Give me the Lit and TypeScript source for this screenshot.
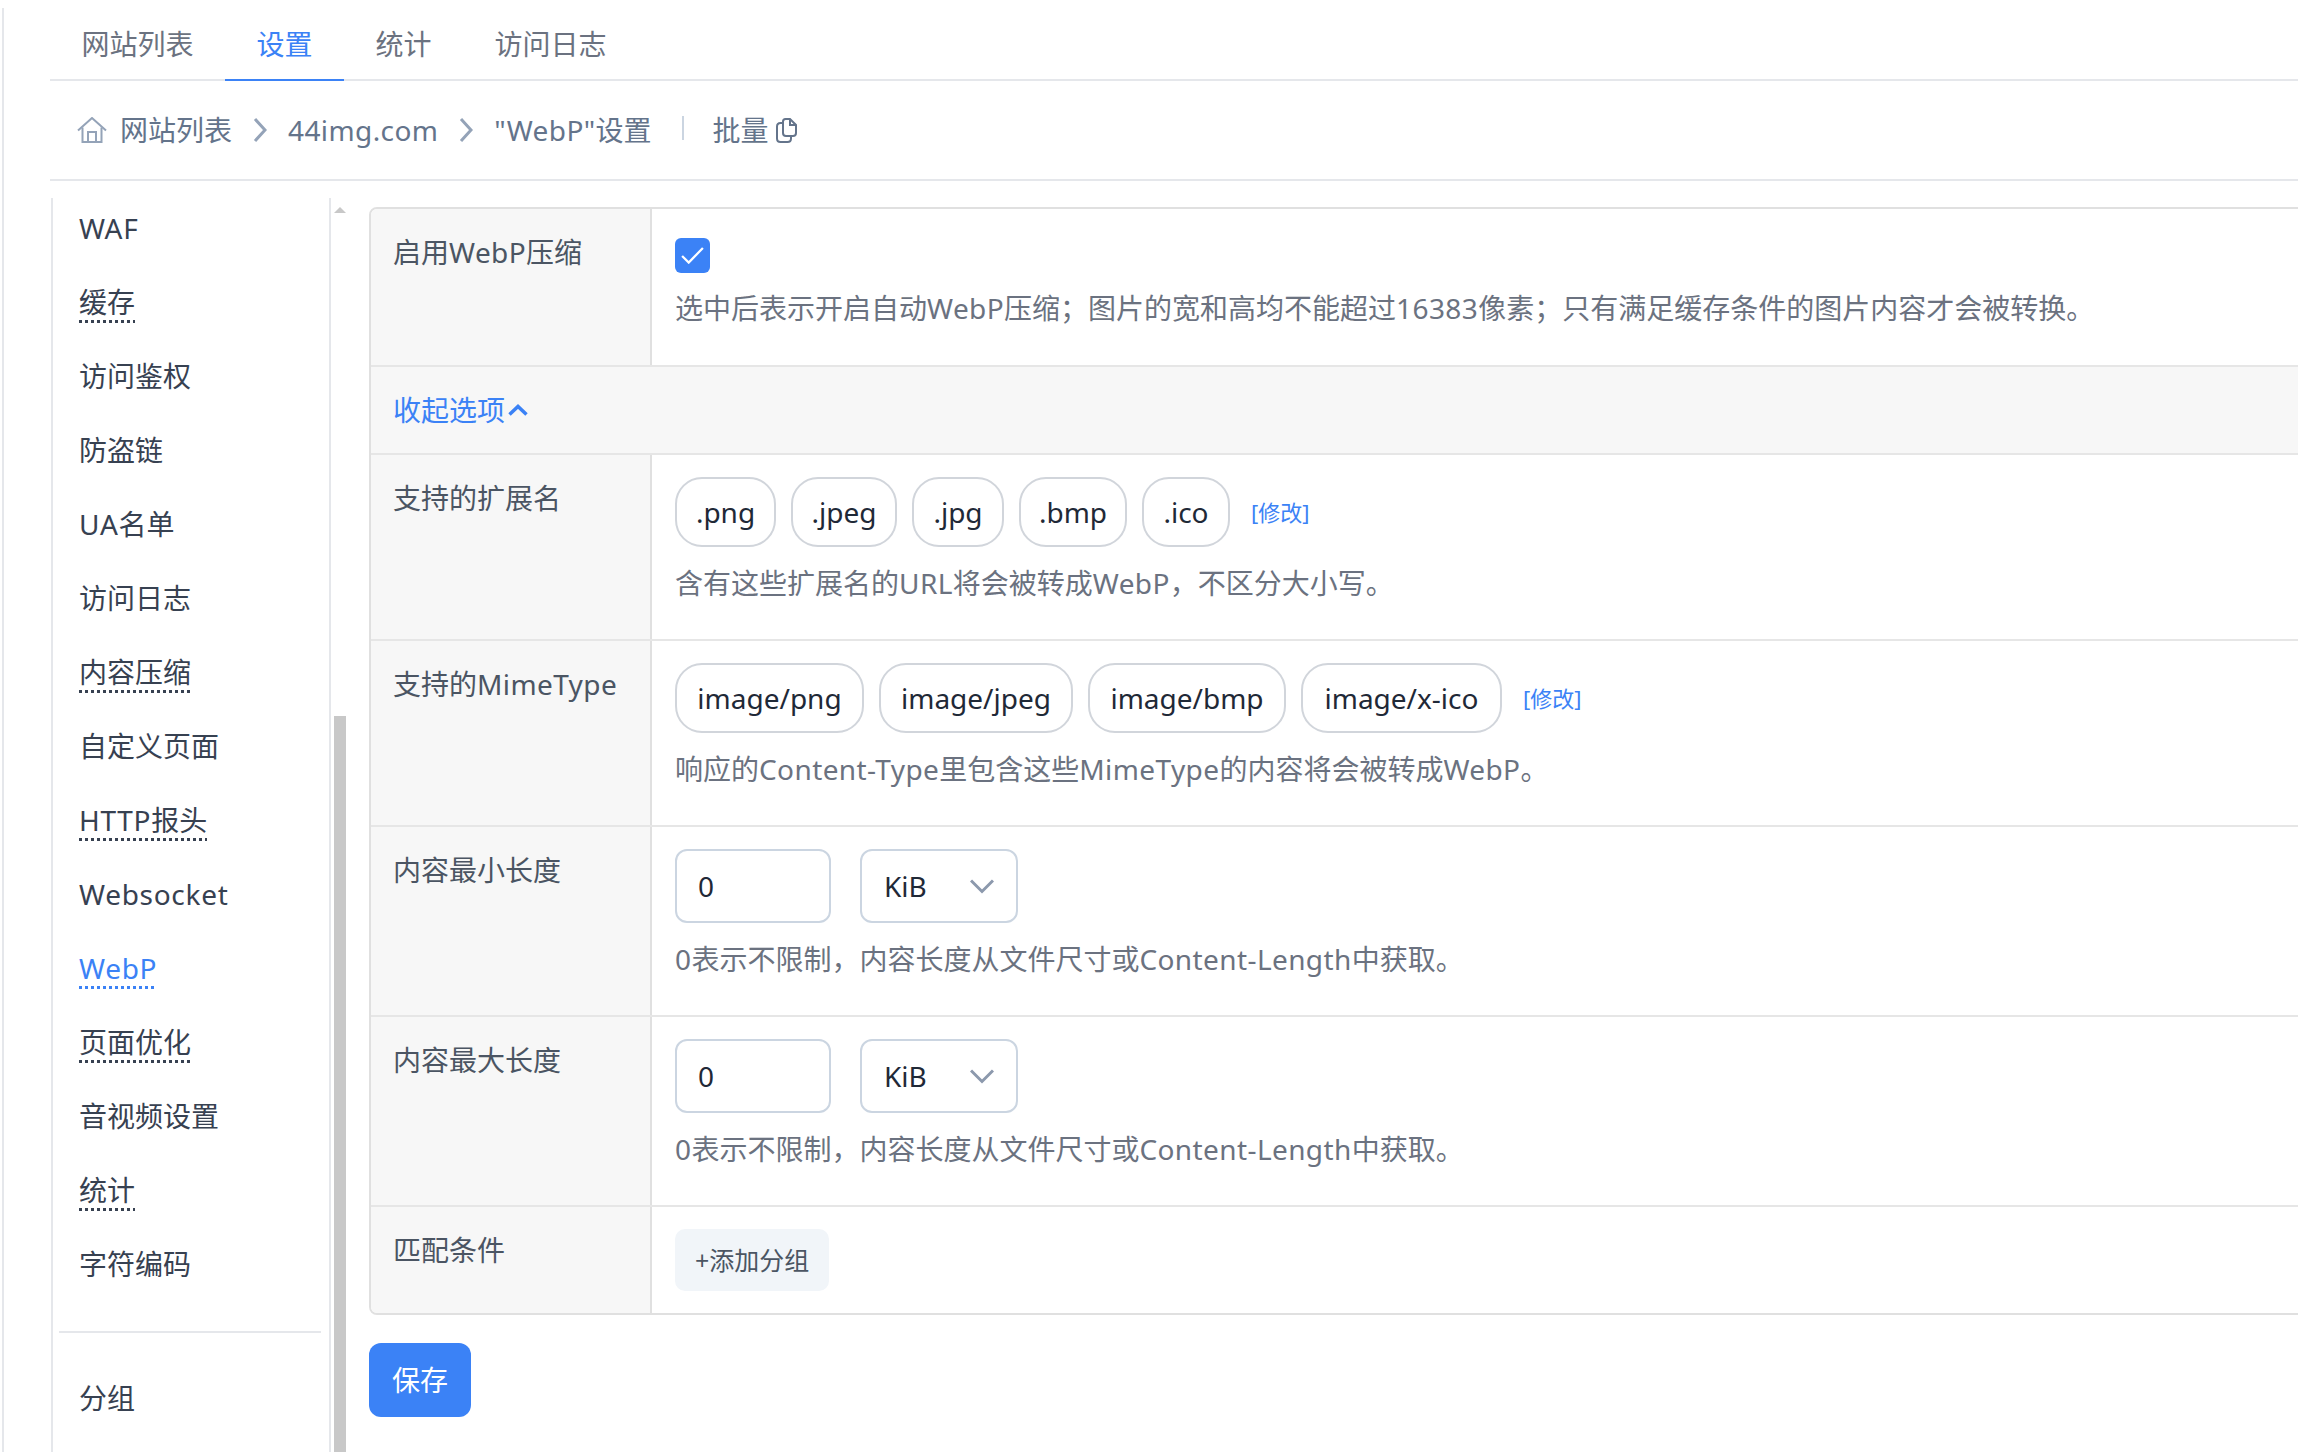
import { LitElement, html, css, svg } from "lit";
import { customElement } from "lit/decorators.js";

const FONT = css`"Noto Sans", "Noto Sans CJK SC", sans-serif`;

const SIDE: [string, string][] = [
  ["WAF", ""],
  ["缓存", "dot"],
  ["访问鉴权", ""],
  ["防盗链", ""],
  ["UA名单", ""],
  ["访问日志", ""],
  ["内容压缩", "dot"],
  ["自定义页面", ""],
  ["HTTP报头", "dot"],
  ["Websocket", ""],
  ["WebP", "dot on"],
  ["页面优化", "dot"],
  ["音视频设置", ""],
  ["统计", "dot"],
  ["字符编码", ""],
];

type Pill = [string, number];
const EXT: Pill[] = [[".png", 101], [".jpeg", 106], [".jpg", 92], [".bmp", 108], [".ico", 88]];
const MIME: Pill[] = [["image/png", 189], ["image/jpeg", 194], ["image/bmp", 198], ["image/x-ico", 201]];

/** Latin runs in the reference's UI font are slightly wider than Noto Sans, so they get their own tracking. */
const la = (text: string) =>
  text.split(/([\x21-\x7e]+)/).map((part, i) => (i % 2 ? html`<span class="latin">${part}</span>` : part));

const chevronRight = svg`<svg class="crumb-sep" viewBox="0 0 14 26" width="14" height="26" fill="none" stroke="#94a3b8" stroke-width="3"><path d="M2 2l10 11L2 24"/></svg>`;

@customElement("app-root")
export class AppRoot extends LitElement {
  static styles = css`
    :host {
      display: block;
      width: 2298px;
      height: 1452px;
      overflow: hidden;
      background: #fff;
      font-family: ${FONT};
      font-size: 28px;
      line-height: 40px;
      color: #374151;
    }
    .latin { letter-spacing: 0.4px; }
    .page {
      margin: 8px 0 0 2px;
      height: 1444px;
      border-left: 2px solid #e5e7eb;
      padding-left: 46px;
      display: flex;
      flex-direction: column;
      box-sizing: border-box;
      overflow: hidden;
    }
    .tabs {
      display: flex;
      height: 73px;
      box-sizing: border-box;
      flex: none;
      border-bottom: 2px solid #e5e7eb;
    }
    .tab {
      padding: 0 31.5px;
      height: 73px;
      box-sizing: border-box;
      display: flex;
      align-items: center;
      color: #6b7280;
      padding-bottom: 2px;
      flex: none;
    }
    .tab.on {
      color: #3b82f6;
      border-bottom: 2px solid #3b82f6;
      padding-bottom: 0;
    }
    .crumbs {
      display: flex;
      align-items: center;
      height: 100px;
      box-sizing: border-box;
      flex: none;
      border-bottom: 2px solid #e5e7eb;
      padding-left: 27px;
      color: #64748b;
    }
    .home { margin-right: 13px; }
    .crumb-sep { margin: 0 21px; flex: none; }
    .vsep {
      width: 2px;
      height: 24px;
      background: #cbd5e1;
      margin: -4px 29px 0 30px;
    }
    .copy { margin-left: 7px; }
    .body {
      display: flex;
      flex: 1;
      min-height: 0;
      margin-top: 17px;
      overflow: hidden;
    }
    .side {
      flex: none;
      width: 280px;
      margin-left: 1px;
      box-sizing: border-box;
      border-left: 2px solid #e5e7eb;
      border-right: 2px solid #e5e7eb;
      padding-left: 26px;
      overflow: hidden;
    }
    .menu { margin-top: -7px; }
    .item {
      height: 74px;
      display: flex;
      align-items: center;
      color: #374151;
    }
    .item > span { display: inline-block; line-height: 42px; height: 42px; }
    .item .latin { letter-spacing: 0.7px; }
    .item .dot {
      background: repeating-linear-gradient(90deg, currentColor 0 3px, transparent 3px 6px) left bottom / 100% 3px no-repeat;
    }
    .item .on { color: #3b82f6; }
    .side-line {
      height: 2px;
      background: #e5e7eb;
      margin: 30px 8px 0 -20px;
    }
    .item.group { margin-top: 28px; }
    .bar {
      flex: none;
      width: 12px;
      margin-left: 3px;
      display: flex;
      flex-direction: column;
    }
    .arrow { margin: 9px 0 503px; display: block; }
    .thumb { flex: 1; background: #c8c8c8; }
    .main {
      flex: none;
      width: 2000px;
      margin-left: 23px;
    }
    .table {
      margin-top: 9px;
      border: 2px solid #e0e0e0;
      border-radius: 8px;
      overflow: hidden;
    }
    .row {
      display: grid;
      grid-template-columns: 281px 1fr;
      border-bottom: 2px solid #e6e6e6;
    }
    .row:last-child { border-bottom: 0; }
    .row.block { display: block; }
    .label {
      background: #f7f7f7;
      padding: 23px 20px 0 22px;
      border-right: 2px solid #e0e0e0;
      color: #4b5563;
    }
    .cell { padding: 22px 23px 36px; }
    .cell.first { padding-bottom: 37px; }
    .cell.short { padding-bottom: 22px; }
    .toggle {
      background: #f7f7f7;
      height: 86px;
      padding-left: 22px;
      display: flex;
      align-items: center;
      color: #3b82f6;
    }
    .toggle svg { margin-left: 3px; }
    .check {
      width: 35px;
      height: 35px;
      border-radius: 6px;
      background: #3b82f6;
      margin-top: 7px;
      display: flex;
      align-items: center;
      justify-content: center;
    }
    .help { color: #6b7280; margin-top: 16px; white-space: nowrap; }
    .check + .help { margin-top: 15px; }
    .pills { display: flex; align-items: center; gap: 15px; }
    .pill {
      height: 70px;
      box-sizing: border-box;
      border: 2px solid #d1d5db;
      border-radius: 27px;
      display: flex;
      align-items: center;
      justify-content: center;
      color: #1f2937;
      white-space: nowrap;
    }
    .edit { color: #3b82f6; font-size: 22px; margin-left: 6px; }
    .inputs { display: flex; gap: 29px; }
    .input, .select {
      height: 74px;
      box-sizing: border-box;
      border: 2px solid #cbd5e1;
      border-radius: 12px;
      display: flex;
      align-items: center;
      color: #1f2937;
    }
    .input { width: 156px; padding-left: 21px; }
    .select {
      width: 158px;
      padding: 0 22px;
      justify-content: space-between;
    }
    .add {
      display: inline-flex;
      align-items: center;
      height: 62px;
      padding: 0 20px;
      background: #f1f5f9;
      border-radius: 10px;
      font-size: 25px;
      color: #4b5563;
    }
    .save {
      margin-top: 28px;
      width: 102px;
      height: 74px;
      border-radius: 12px;
      background: #3b82f6;
      color: #fff;
      display: flex;
      align-items: center;
      justify-content: center;
    }
  `;

  private sizeRow(label: string) {
    return html`<div class="row">
      <div class="label">${label}</div>
      <div class="cell">
        <div class="inputs">
          <div class="input">0</div>
          <div class="select">
            <span>KiB</span>
            <svg viewBox="0 0 24 15" width="24" height="15" fill="none" stroke="#8c99ad" stroke-width="3"><path d="M1 1.500l11 11 11-11"/></svg>
          </div>
        </div>
        <div class="help">${la("0表示不限制，内容长度从文件尺寸或Content-Length中获取。")}</div>
      </div>
    </div>`;
  }

  private pillRow(label: string, pills: Pill[], help: string) {
    return html`<div class="row">
      <div class="label">${la(label)}</div>
      <div class="cell">
        <div class="pills">
          ${pills.map(([t, w]) => html`<div class="pill" style="width:${w}px">${t}</div>`)}
          <div class="edit">[修改]</div>
        </div>
        <div class="help">${la(help)}</div>
      </div>
    </div>`;
  }

  render() {
    return html`<div class="page">
      <div class="tabs">
        <div class="tab">网站列表</div>
        <div class="tab on">设置</div>
        <div class="tab">统计</div>
        <div class="tab">访问日志</div>
      </div>
      <div class="crumbs">
        <svg class="home" viewBox="0 0 30 26" width="30" height="26" fill="none" stroke="#94a3b8" stroke-width="2"><path d="M1 13.500L15 1l14 12.500"/><path d="M5.500 10.500V25h19V10.500"/><path d="M11 25V15h8v10"/></svg>
        <span>网站列表</span>
        ${chevronRight}
        <span>${la("44img.com")}</span>
        ${chevronRight}
        <span>${la('"WebP"设置')}</span>
        <div class="vsep"></div>
        <span>批量</span>
        <svg class="copy" viewBox="0 0 21 25" width="21" height="25" fill="none" stroke="#64748b" stroke-width="2"><path d="M7 5H4.500C2.500 5 1 6.500 1 8.500v12C1 22.500 2.500 24 4.500 24h7c2 0 3.500-1.500 3.500-3.500V18"/><path d="M7 3.500C7 2 8 1 9.500 1H14l6 6v8c0 1.700-1.300 3-3 3H10c-1.700 0-3-1.300-3-3z"/><path d="M14 1v6h6"/></svg>
      </div>
      <div class="body">
        <div class="side">
          <div class="menu">
            ${SIDE.map(([t, c]) => html`<div class="item"><span class=${c}>${la(t)}</span></div>`)}
          </div>
          <div class="side-line"></div>
          <div class="item group"><span>分组</span></div>
        </div>
        <div class="bar">
          <svg class="arrow" viewBox="0 0 12 6" width="12" height="6"><path d="M6 0l6 6H0z" fill="#c8c8c8"/></svg>
          <div class="thumb"></div>
        </div>
        <div class="main">
          <div class="table">
            <div class="row">
              <div class="label">${la("启用WebP压缩")}</div>
              <div class="cell first">
                <div class="check">
                  <svg viewBox="0 0 24 18" width="23" height="17" fill="none" stroke="#fff" stroke-width="2.400"><path d="M1 9.500l7 7L23 1"/></svg>
                </div>
                <div class="help">${la("选中后表示开启自动WebP压缩；图片的宽和高均不能超过16383像素；只有满足缓存条件的图片内容才会被转换。")}</div>
              </div>
            </div>
            <div class="row block">
              <div class="toggle">
                <span>收起选项</span>
                <svg viewBox="0 0 20 12" width="20" height="12" fill="none" stroke="#3b82f6" stroke-width="3.500"><path d="M1.500 10.500L10 2.500l8.500 8"/></svg>
              </div>
            </div>
            ${this.pillRow("支持的扩展名", EXT, "含有这些扩展名的URL将会被转成WebP，不区分大小写。")}
            ${this.pillRow("支持的MimeType", MIME, "响应的Content-Type里包含这些MimeType的内容将会被转成WebP。")}
            ${this.sizeRow("内容最小长度")}
            ${this.sizeRow("内容最大长度")}
            <div class="row">
              <div class="label">匹配条件</div>
              <div class="cell short"><div class="add">+添加分组</div></div>
            </div>
          </div>
          <div class="save">保存</div>
        </div>
      </div>
    </div>`;
  }
}
